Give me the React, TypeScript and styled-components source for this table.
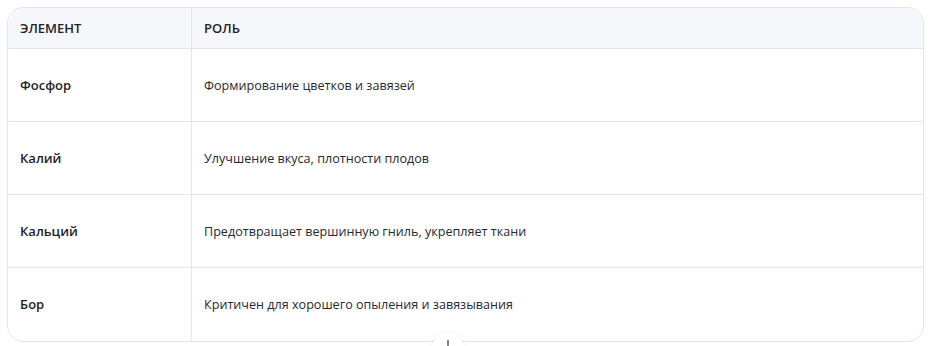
import styled, { createGlobalStyle } from "styled-components";

const GlobalStyle = createGlobalStyle`
  html, body {
    margin: 0;
    padding: 0;
    background: #ffffff;
  }
  body {
    font-family: "Open Sans", "Noto Sans", sans-serif;
    color: #1f2328;
  }
`;

const Page = styled.div`
  position: relative;
  padding: 7px 8px 5px 7px;
  width: 932px;
  height: 346px;
  box-sizing: border-box;
  overflow: hidden;
`;

const TableFrame = styled.div`
  border: 1px solid #e4e5ec;
  border-radius: 16px;
  overflow: hidden;
`;

const Table = styled.table`
  width: 100%;
  border-collapse: collapse;
  table-layout: fixed;
`;

const HeadCell = styled.th<{ wide?: boolean }>`
  width: ${({ wide }) => (wide ? "auto" : "159px")};
  height: 40px;
  padding: 0 12px;
  background: #f6f7fa;
  text-align: left;
  font-size: 13px;
  font-weight: 600;
  color: #1f2328;
  border-bottom: 1px solid #e4e5ec;
  border-left: ${({ wide }) => (wide ? "1px solid #e4e5ec" : "none")};
`;

const Row = styled.tr<{ last?: boolean }>`
  height: 73px;
  border-bottom: ${({ last }) => (last ? "none" : "1px solid #e4e5ec")};
`;

const Cell = styled.td<{ strong?: boolean }>`
  padding: 0 12px;
  font-size: ${({ strong }) => (strong ? "13px" : "12.6px")};
  font-weight: ${({ strong }) => (strong ? 600 : 400)};
  color: ${({ strong }) => (strong ? "#1f2328" : "#262a30")};
  border-left: ${({ strong }) => (strong ? "none" : "1px solid #e4e5ec")};
`;

const ScrollButton = styled.button`
  position: absolute;
  left: 432px;
  top: 333px;
  width: 32px;
  height: 32px;
  border-radius: 50%;
  border: none;
  background: #ffffff;
  box-shadow: 0 0 8px rgba(0, 0, 0, 0.06);
  display: flex;
  justify-content: center;
  padding-top: 7px;
  box-sizing: border-box;
`;

const rows = [
  { name: "Фосфор", role: "Формирование цветков и завязей" },
  { name: "Калий", role: "Улучшение вкуса, плотности плодов" },
  { name: "Кальций", role: "Предотвращает вершинную гниль, укрепляет ткани" },
  { name: "Бор", role: "Критичен для хорошего опыления и завязывания" },
];

export default function App() {
  return (
    <>
      <GlobalStyle />
      <Page>
        <TableFrame>
          <Table>
            <thead>
              <tr>
                <HeadCell>ЭЛЕМЕНТ</HeadCell>
                <HeadCell wide>РОЛЬ</HeadCell>
              </tr>
            </thead>
            <tbody>
              {rows.map((r, i) => (
                <Row key={r.name} last={i === rows.length - 1}>
                  <Cell strong>{r.name}</Cell>
                  <Cell>{r.role}</Cell>
                </Row>
              ))}
            </tbody>
          </Table>
        </TableFrame>
        <ScrollButton aria-label="Прокрутить вниз">
          <svg width="12" height="12" viewBox="0 0 12 12" fill="none">
            <path d="M6 0v11M2 7l4 4 4-4" stroke="#555" strokeWidth="1.4" strokeLinecap="round" strokeLinejoin="round" />
          </svg>
        </ScrollButton>
      </Page>
    </>
  );
}
